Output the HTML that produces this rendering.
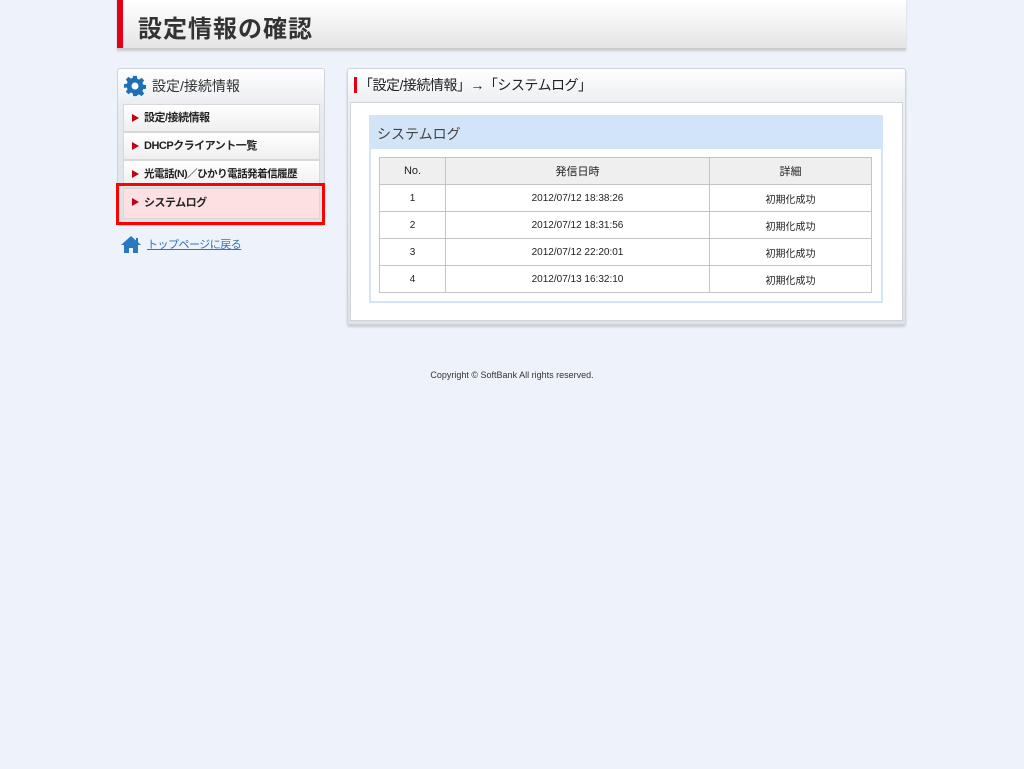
<!DOCTYPE html>
<html><head><meta charset="utf-8"><style>
*{margin:0;padding:0;box-sizing:border-box}
body{width:1024px;height:769px;background:#eef3fb;font-family:"Liberation Sans","Noto Sans CJK JP",sans-serif;color:#222;position:relative;overflow:hidden}
.a{position:absolute}
.hdr{left:117px;top:0;width:789px;height:50px;background:linear-gradient(#fff,#f0f0f0 60%,#e4e4e4);border-bottom:2px solid #ccc;box-shadow:0 1px 2px #ccc}
.hdr .bar{left:0;top:0;width:6px;height:48px;background:#e60012}
.hdr .t{left:21px;top:9px;font-size:24px;font-weight:bold;color:#333;letter-spacing:1px}
.lp{left:117px;top:68px;width:208px;height:158px;background:linear-gradient(#fff,#e8ebef 40px,#dde2e8);border:1px solid #d0d4da;border-radius:3px}
.item{position:absolute;left:5px;width:197px;height:28px;background:linear-gradient(#fff,#efefef);border:1px solid #d8d8d8;font-size:11px;font-weight:bold;padding-left:20px;line-height:26px;color:#222;letter-spacing:-0.5px;white-space:nowrap}
.item:before{content:"";position:absolute;left:8px;top:9px;border-left:7px solid #c00018;border-top:4.5px solid transparent;border-bottom:4.5px solid transparent}
.rp{left:347px;top:68px;width:559px;height:257px;background:linear-gradient(#fff,#eef0f3 30px,#dfe3e8);border:1px solid #d0d4da;border-radius:3px;box-shadow:0 2px 2px #c8ccd2}
.inner{left:2px;top:33px;width:553px;height:219px;background:#fff;border:1px solid #cfd3d8}
table{border-collapse:collapse;font-size:10px;position:absolute;left:8px;top:40px;width:493px}
td,th{border:1px solid #c4c4c4;height:27px;text-align:center;font-weight:normal}
th{background:#efefef;font-size:11px}
</style></head><body>
<div class="a hdr"><div class="a bar"></div><div class="a t">設定情報の確認</div></div>

<div class="a lp">
 <svg class="a" style="left:6px;top:6px" width="22" height="22" viewBox="0 0 24 24"><path fill="#1e6fb6" d="M10 1h4l.6 3.2 1.9.8 2.7-1.9 2.8 2.8-1.9 2.7.8 1.9 3.1.5v4l-3.1.6-.8 1.9 1.9 2.7-2.8 2.8-2.7-1.9-1.9.8L14 23h-4l-.6-3.1-1.9-.8-2.7 1.9-2.8-2.8 1.9-2.7-.8-1.9L0 14v-4l3.1-.5.8-1.9L2 4.9 4.8 2.1l2.7 1.9 1.9-.8z"/><circle cx="12" cy="12" r="3.8" fill="#fff"/></svg>
 <div class="a" style="left:34px;top:7px;font-size:14px;color:#333">設定/接続情報</div>
 <div class="item" style="top:35px">設定/接続情報</div>
 <div class="item" style="top:63px">DHCPクライアント一覧</div>
 <div class="item" style="top:91px;font-size:10.5px">光電話(N)／ひかり電話発着信履歴</div>
 <div class="item" style="top:119px;background:#fde0e2;height:31px;line-height:28px">システムログ</div>
</div>
<div class="a" style="left:116px;top:183px;width:209px;height:42px;border:3px solid #f00"></div>

<svg class="a" style="left:121px;top:235px" width="20" height="19" viewBox="0 0 20 19"><path fill="#2a78c0" d="M10 1 0 10h3v8h5v-5h4v5h5v-8h3l-3-2.7V3h-2v2.5z"/></svg>
<div class="a" style="left:147px;top:236px;font-size:11px;color:#3a72b0;text-decoration:underline;letter-spacing:-0.5px">トップページに戻る</div>

<div class="a rp">
 <div class="a" style="left:6px;top:8px;width:3px;height:16px;background:#e60012"></div>
 <div class="a" style="left:11px;top:6px;font-size:14px;color:#222;letter-spacing:-0.5px">「設定/接続情報」→「システムログ」</div>
 <div class="a inner">
  <div class="a" style="left:18px;top:12px;width:514px;height:188px;border:2px solid #d3e4f7;background:#fff">
   <div class="a" style="left:0;top:0;width:510px;height:32px;background:#d2e4f8"></div>
   <div class="a" style="left:6px;top:7px;font-size:14px;color:#444">システムログ</div>
   <table>
    <tr><th style="width:66px">No.</th><th style="width:264px">発信日時</th><th>詳細</th></tr>
    <tr><td>1</td><td>2012/07/12 18:38:26</td><td>初期化成功</td></tr>
    <tr><td>2</td><td>2012/07/12 18:31:56</td><td>初期化成功</td></tr>
    <tr><td>3</td><td>2012/07/12 22:20:01</td><td>初期化成功</td></tr>
    <tr><td>4</td><td>2012/07/13 16:32:10</td><td>初期化成功</td></tr>
   </table>
  </div>
 </div>
</div>

<div class="a" style="left:0;top:370px;width:1024px;text-align:center;font-size:9px;color:#333">Copyright © SoftBank All rights reserved.</div>
</body></html>
